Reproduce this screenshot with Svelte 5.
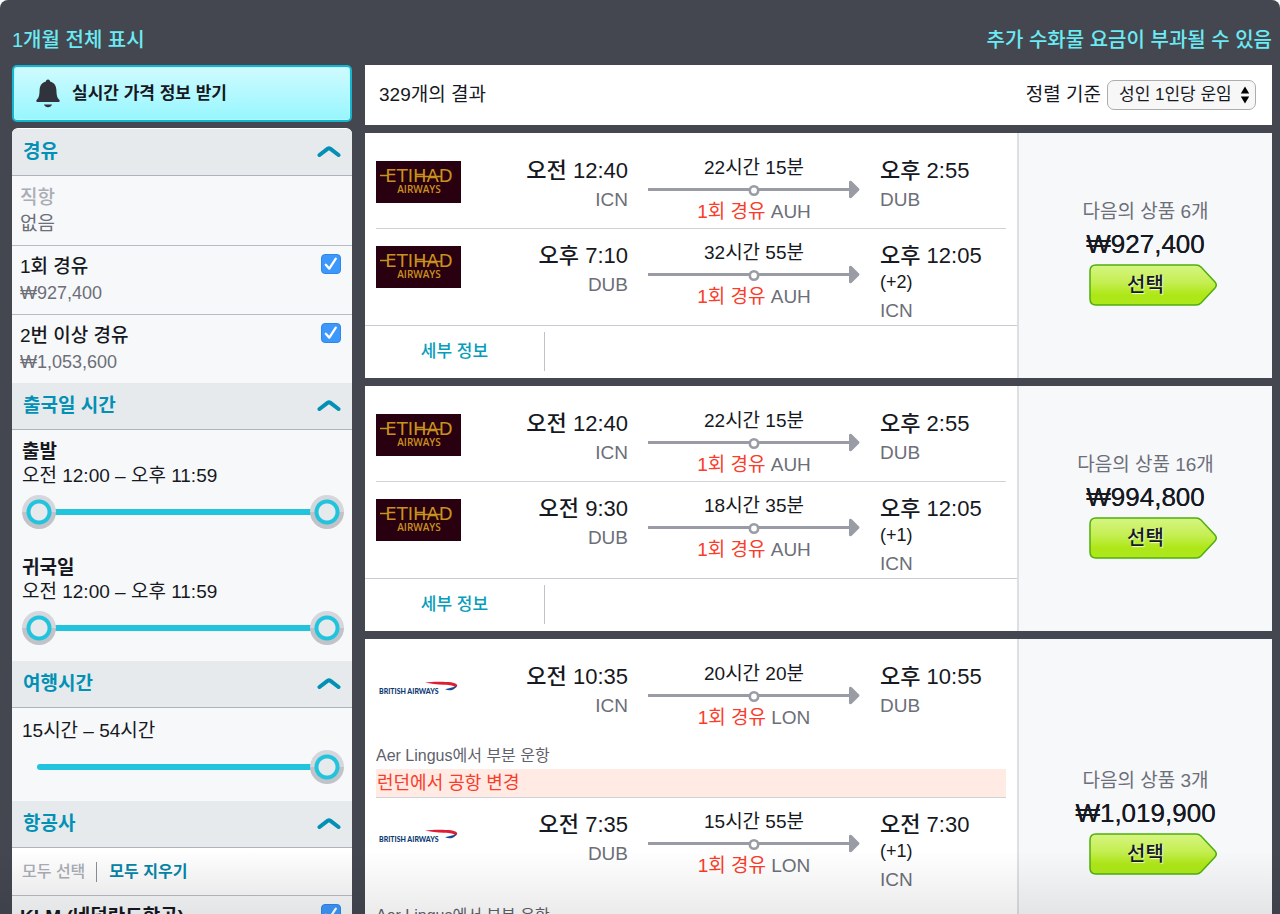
<script lang="ts">
	interface Leg {
		airline: 'etihad' | 'ba';
		depart: string;
		from: string;
		duration: string;
		via: string;
		arrive: string;
		days?: string;
		to: string;
		operator?: string;
		warning?: string;
	}

	interface Flight {
		deals: number;
		price: string;
		legs: Leg[];
	}

	const partly = 'Aer Lingus에서 부분 운항';
	const airportChange = '런던에서 공항 변경';

	const flights: Flight[] = [
		{
			deals: 6,
			price: '₩927,400',
			legs: [
				{ airline: 'etihad', depart: '오전 12:40', from: 'ICN', duration: '22시간 15분', via: 'AUH', arrive: '오후 2:55', to: 'DUB' },
				{ airline: 'etihad', depart: '오후 7:10', from: 'DUB', duration: '32시간 55분', via: 'AUH', arrive: '오후 12:05', days: '(+2)', to: 'ICN' }
			]
		},
		{
			deals: 16,
			price: '₩994,800',
			legs: [
				{ airline: 'etihad', depart: '오전 12:40', from: 'ICN', duration: '22시간 15분', via: 'AUH', arrive: '오후 2:55', to: 'DUB' },
				{ airline: 'etihad', depart: '오전 9:30', from: 'DUB', duration: '18시간 35분', via: 'AUH', arrive: '오후 12:05', days: '(+1)', to: 'ICN' }
			]
		},
		{
			deals: 3,
			price: '₩1,019,900',
			legs: [
				{ airline: 'ba', depart: '오전 10:35', from: 'ICN', duration: '20시간 20분', via: 'LON', arrive: '오후 10:55', to: 'DUB', operator: partly, warning: airportChange },
				{ airline: 'ba', depart: '오전 7:35', from: 'DUB', duration: '15시간 55분', via: 'LON', arrive: '오전 7:30', days: '(+1)', to: 'ICN', operator: partly, warning: airportChange }
			]
		}
	];

	const timeFilters = [
		{ id: 'out', title: '출발' },
		{ id: 'back', title: '귀국일' }
	];

	let open = $state({ stops: true, times: true, duration: true, airlines: true });
	let oneStop = $state(true);
	let twoStops = $state(true);
	let klm = $state(true);
</script>

{#snippet heading(title: string, key: keyof typeof open)}
	<h2 class="section-head">
		<button type="button" aria-expanded={open[key]} onclick={() => (open[key] = !open[key])}>
			{title}
			<svg class="chevron" class:closed={!open[key]} width="24" height="14" viewBox="0 0 24 14" aria-hidden="true">
				<path d="M2.500 10 10.800 3.600q1.200-.8 2.400 0L21.500 10" fill="none" stroke="#0291b5" stroke-width="4" stroke-linecap="round" stroke-linejoin="round" />
			</svg>
		</button>
	</h2>
{/snippet}

{#snippet tick()}
	<svg class="tick" width="20" height="20" viewBox="0 0 20 20" aria-hidden="true">
		<path d="M4.800 10.800 8.300 14.600 14.800 4.600" fill="none" stroke="#fff" stroke-width="2.300" stroke-linecap="round" stroke-linejoin="round" />
	</svg>
{/snippet}

{#snippet logo(airline: string)}
	{#if airline === 'etihad'}
		<svg class="logo" width="85" height="42" viewBox="0 0 85 42" role="img" aria-label="Etihad Airways">
			<rect width="85" height="42" fill="#28000f" />
			<g fill="#c8921e" text-anchor="middle">
				<text x="43" y="21" font-family="DejaVu Sans, sans-serif" font-size="18">ETIHAD</text>
				<text x="43" y="32" font-family="Open Sans, sans-serif" font-size="10" font-weight="600">AIRWAYS</text>
			</g>
			<path d="M4 14.500h8M40 15.500h26" stroke="#c8921e" stroke-width="1.500" />
		</svg>
	{:else}
		<svg class="logo" width="85" height="42" viewBox="0 0 85 42" role="img" aria-label="British Airways">
			<text x="3" y="27" font-family="Lato, sans-serif" font-size="7" font-weight="900" fill="#0d3a73">BRITISH AIRWAYS</text>
			<path d="M49 15.500C56 14.500 68 14.500 75 15.200 81 16 83 18.500 79.500 21 79 18.800 74 18 68 17.800 61 17.500 54 16.800 49 15.500Z" fill="#dc1f36" />
			<path d="M69 22.300C73 21.500 77 20.500 80.500 18.800 79.500 22 75 25 69 22.300Z" fill="#1c4a92" />
		</svg>
	{/if}
{/snippet}

<div class="page">
	<div class="top-links">
		<a href="#month">1개월 전체 표시</a>
		<a href="#baggage">추가 수화물 요금이 부과될 수 있음</a>
	</div>

	<div class="columns">
		<aside>
			<button type="button" class="alert-btn">
				<svg width="24" height="29" viewBox="0 0 24 29" aria-hidden="true">
					<path d="M12 .5c1.300 0 2 .8 2 2 4.300 1 6.200 4.300 6.400 8.500.2 5.500.6 7.500 3 10 .5.600.4 2-.7 2H1.300c-1.100 0-1.200-1.400-.7-2 2.400-2.500 2.800-4.500 3-10C3.800 6.800 5.700 3.500 10 2.500c0-1.200.7-2 2-2Z" fill="#30323c" />
					<path d="M8 25.500h8c-.8 1.800-2 2.800-4 2.800s-3.200-1-4-2.800Z" fill="#30323c" />
				</svg>
				실시간 가격 정보 받기
			</button>

			<div class="filters">
				{@render heading('경유', 'stops')}
				{#if open.stops}
					<div class="stop-row none">
						<div>직항</div>
						<div class="sub">없음</div>
					</div>
					<label class="stop-row">
						<span>1회 경유<span class="sub">₩927,400</span></span>
						<span class="check"><input type="checkbox" bind:checked={oneStop} />{@render tick()}</span>
					</label>
					<label class="stop-row last">
						<span>2번 이상 경유<span class="sub">₩1,053,600</span></span>
						<span class="check"><input type="checkbox" bind:checked={twoStops} />{@render tick()}</span>
					</label>
				{/if}

				{@render heading('출국일 시간', 'times')}
				{#if open.times}
					<div class="times">
						{#each timeFilters as filter (filter.id)}
							<div class="time-filter">
								<h3>{filter.title}</h3>
								<p>오전 12:00 – 오후 11:59</p>
								<div class="slider">
									<input type="range" min="0" max="1439" value="0" aria-label="{filter.title} 최소" />
									<input type="range" min="0" max="1439" value="1439" aria-label="{filter.title} 최대" />
								</div>
							</div>
						{/each}
					</div>
				{/if}

				{@render heading('여행시간', 'duration')}
				{#if open.duration}
					<div class="duration">
						<p>15시간 – 54시간</p>
						<div class="slider">
							<input type="range" min="15" max="54" value="54" aria-label="여행시간" />
						</div>
					</div>
				{/if}

				{@render heading('항공사', 'airlines')}
				{#if open.airlines}
					<div class="pick-all">
						<button type="button" disabled>모두 선택</button>
						<button type="button" onclick={() => (klm = false)}>모두 지우기</button>
					</div>
					<label class="stop-row airline">
						<span>KLM (네덜란드항공)</span>
						<span class="check"><input type="checkbox" bind:checked={klm} />{@render tick()}</span>
					</label>
				{/if}
			</div>
		</aside>

		<main>
			<div class="result-bar">
				<span>329개의 결과</span>
				<div class="sort">
					<label for="sort">정렬 기준</label>
					<div class="select">
						<select id="sort">
							<option>성인 1인당 운임</option>
						</select>
						<svg width="10" height="18" viewBox="0 0 10 18" aria-hidden="true">
							<path d="M5 .5 9.200 7.500H.8ZM5 17.500 9.200 10.500H.8Z" fill="#000" />
						</svg>
					</div>
				</div>
			</div>

			{#each flights as flight}
				<article class="card">
					<div class="trip">
						<div class="legs">
							{#each flight.legs as leg}
								<section class="leg-wrap">
									<div class="leg">
										{@render logo(leg.airline)}
										<div class="depart">
											<div class="time">{leg.depart}</div>
											<div class="code">{leg.from}</div>
										</div>
										<div class="path">
											<div>{leg.duration}</div>
											<svg width="212" height="20" viewBox="0 0 212 20" aria-hidden="true">
												<path d="M0 9.500h202" stroke="#9a9ca5" stroke-width="3" />
												<path d="M201 1.500q1.500-1.500 3 0l7 7q1 1 0 2l-7 7q-1.500 1.500-3 0Z" fill="#9a9ca5" />
												<circle cx="106" cy="10.500" r="4.200" fill="#fff" stroke="#9a9ca5" stroke-width="2.600" />
											</svg>
											<div><span class="stops">1회 경유</span> <span class="via">{leg.via}</span></div>
										</div>
										<div class="arrive">
											<div class="time">{leg.arrive}</div>
											{#if leg.days}
												<div class="days">{leg.days}</div>
											{/if}
											<div class="code">{leg.to}</div>
										</div>
									</div>
									{#if leg.operator}
										<div class="operator">{leg.operator}</div>
									{/if}
									{#if leg.warning}
										<div class="warning">{leg.warning}</div>
									{/if}
								</section>
							{/each}
						</div>
						<div class="card-foot">
							<a href="#details">세부 정보</a>
						</div>
					</div>
					<div class="offer">
						<div class="deals">다음의 상품 {flight.deals}개</div>
						<div class="price">{flight.price}</div>
						<button type="button" class="choose">
							<svg width="128" height="42" viewBox="0 0 128 42" aria-hidden="true">
								<defs>
									<linearGradient id="lime" x1="0" y1="0" x2="0" y2="1">
										<stop offset="0" stop-color="#d6f583" />
										<stop offset=".45" stop-color="#c4ee50" />
										<stop offset=".75" stop-color="#aee717" />
										<stop offset="1" stop-color="#aee81c" />
									</linearGradient>
								</defs>
								<path d="M7 1h100q3 0 5 2l14 15q2.500 3 0 6l-14 15q-2 2-5 2H7q-6 0-6-6V7q0-6 6-6Z" fill="url(#lime)" stroke="#4fae0c" stroke-width="1.500" />
							</svg>
							<span>선택</span>
						</button>
					</div>
				</article>
			{/each}
		</main>
	</div>
	<div class="fade"></div>
</div>

<style>
	:global(body) {
		margin: 0;
		background: #fff;
	}

	.page {
		position: relative;
		box-sizing: border-box;
		height: 100vh;
		overflow: hidden;
		padding: 0 8px 0 12px;
		border-radius: 8px 8px 0 0;
		background: #444750;
		color: #161822;
		font-family: 'Liberation Sans', 'Noto Sans CJK KR', sans-serif;
		font-size: 19px;
		line-height: 24px;
	}

	h2,
	h3,
	p {
		margin: 0;
		font-size: inherit;
		font-weight: 400;
	}

	button,
	select {
		font: inherit;
		color: inherit;
		cursor: pointer;
	}

	a {
		text-decoration: none;
	}

	.top-links {
		display: flex;
		justify-content: space-between;
		padding: 28px 0 13px;
		font-size: 20px;
	}

	.top-links a {
		color: #6bebf3;
		font-weight: 500;
	}

	.columns {
		display: grid;
		grid-template-columns: 340px 1fr;
		gap: 13px;
		align-items: start;
	}

	/* sidebar */
	.alert-btn {
		display: flex;
		align-items: center;
		gap: 12px;
		width: 100%;
		height: 57px;
		margin-bottom: 6px;
		padding: 0 22px;
		border: 2px solid #17b5cd;
		border-radius: 5px;
		background: linear-gradient(#cffbff, #97f6fe);
		box-shadow: inset 0 0 0 1px #b4f8ff;
		font-size: 17px;
		font-weight: 600;
	}

	.filters {
		border-top: 1px solid #fff;
		border-radius: 6px 6px 0 0;
		overflow: hidden;
		background: #f7f8fa;
	}

	.section-head button {
		display: flex;
		align-items: center;
		justify-content: space-between;
		width: 100%;
		height: 47px;
		padding: 0 11px;
		border: 0;
		border-bottom: 1px solid #b0b3bb;
		background: #e6eaed;
		color: #0291b5;
		font-weight: 600;
	}

	.chevron.closed {
		transform: rotate(180deg);
	}

	.stop-row {
		display: flex;
		justify-content: space-between;
		padding: 8px 11px 8px 8px;
		border-bottom: 1px solid #b8bbc3;
		font-weight: 500;
		line-height: 26px;
	}

	.stop-row.none {
		display: block;
		padding-top: 9px;
		color: #aaadb5;
	}

	.stop-row.last {
		border-bottom: 0;
	}

	.sub {
		display: block;
		color: #6c6e78;
		font-weight: 400;
	}

	span.sub {
		font-size: 18px;
	}

	.check {
		position: relative;
		width: 20px;
		height: 20px;
	}

	.check input {
		display: block;
		width: 20px;
		height: 20px;
		margin: 0;
		appearance: none;
		border: 1px solid #2f86ea;
		border-radius: 4px;
		background: #fff;
	}

	.check input:checked {
		background: #3c98fb;
	}

	.tick {
		position: absolute;
		inset: 0;
		pointer-events: none;
	}

	.times {
		display: flex;
		flex-direction: column;
		gap: 27px;
		padding: 10px 8px 16px 10px;
	}

	.time-filter h3 {
		font-weight: 600;
	}

	.duration {
		padding: 11px 8px 17px 10px;
	}

	.slider {
		position: relative;
		height: 34px;
		margin-top: 7px;
	}

	.slider::before {
		content: '';
		position: absolute;
		inset: 14px 15px;
		border-radius: 3px;
		background: #22c3dc;
	}

	.slider input {
		position: absolute;
		inset: 0;
		width: 100%;
		height: 34px;
		margin: 0;
		appearance: none;
		background: none;
		pointer-events: none;
	}

	.slider input::-webkit-slider-thumb {
		appearance: none;
		width: 34px;
		height: 34px;
		border-radius: 50%;
		background:
			radial-gradient(circle, #e6eaed 8px, #22c3dc 9px, #22c3dc 12px, transparent 13px),
			linear-gradient(#d5d7dc 50%, #c1c3c9 50%);
		pointer-events: auto;
	}

	.pick-all {
		display: flex;
		align-items: center;
		height: 47px;
		padding: 0 10px;
		border-bottom: 1px solid #b8bbc3;
		background: linear-gradient(#fff, #f9f9fa);
		font-size: 16px;
	}

	.pick-all button {
		padding: 0;
		border: 0;
		background: none;
		color: #0285a8;
		font-weight: 600;
		line-height: 20px;
	}

	.pick-all button:disabled {
		margin-right: 12px;
		padding-right: 11px;
		border-right: 1px solid #8c8e96;
		color: #aaadb5;
		font-weight: 500;
	}

	.airline {
		font-weight: 600;
	}

	/* results */
	main {
		display: flex;
		flex-direction: column;
		gap: 8px;
		min-width: 0;
	}

	.result-bar {
		display: flex;
		align-items: center;
		justify-content: space-between;
		height: 60px;
		padding: 0 16px 0 14px;
		background: #fff;
	}

	.sort {
		display: flex;
		align-items: center;
		gap: 6px;
	}

	.select {
		position: relative;
	}

	.select select {
		display: block;
		width: 149px;
		height: 30px;
		padding: 0 0 0 11px;
		appearance: none;
		border: 1px solid #adadad;
		border-radius: 7px;
		background: #f7f7f7;
		font-size: 17px;
	}

	.select svg {
		position: absolute;
		top: 6px;
		right: 6px;
		pointer-events: none;
	}

	.card {
		display: grid;
		grid-template-columns: 1fr 255px;
		background: #fff;
	}

	.legs {
		padding: 11px 11px 0;
		border-bottom: 1px solid #c9ccd2;
	}

	.leg-wrap:first-child {
		border-bottom: 1px solid #cfd2d6;
	}

	.leg {
		display: grid;
		grid-template-columns: 85px 1fr 212px 126px;
		gap: 20px;
		min-height: 84px;
	}

	.logo {
		margin-top: 17px;
	}

	.depart,
	.path,
	.arrive {
		padding-top: 12px;
	}

	.depart {
		text-align: right;
	}

	.time {
		font-size: 22px;
		font-weight: 500;
		line-height: 30px;
	}

	.code {
		color: #6c6e78;
		line-height: 28px;
	}

	.days {
		padding-bottom: 4px;
		font-size: 18px;
		line-height: 22px;
	}

	.path {
		text-align: center;
	}

	.path svg {
		display: block;
	}

	.stops {
		color: #fa3c2b;
	}

	.via {
		color: #6c6e78;
	}

	.operator {
		padding: 10px 0 1px;
		color: #5f616b;
		font-size: 16px;
	}

	.warning {
		padding-left: 1px;
		background: #ffeae4;
		color: #fa3c2b;
		font-size: 18px;
		line-height: 28px;
	}

	.card-foot {
		display: flex;
		padding: 6px 0 7px;
	}

	.card-foot a {
		width: 179px;
		border-right: 1px solid #bfc2c8;
		color: #069dbb;
		font-size: 17px;
		font-weight: 500;
		line-height: 39px;
		text-align: center;
	}

	.offer {
		display: flex;
		flex-direction: column;
		align-items: center;
		justify-content: center;
		padding-bottom: 7px;
		border-left: 2px solid #dcdfe4;
		background: #f7f8fa;
	}

	.deals {
		color: #6c6e78;
		line-height: 28px;
	}

	.price {
		font-size: 26px;
		font-weight: 500;
		line-height: 36px;
		text-shadow: 0 0 currentColor;
	}

	.choose {
		position: relative;
		width: 128px;
		height: 42px;
		margin: 2px 0 0 14px;
		padding: 0 14px 0 0;
		border: 0;
		background: none;
		font-size: 20px;
		font-weight: 500;
		text-shadow: 1px 1px 1px #f4ffd8;
	}

	.choose svg {
		position: absolute;
		inset: 0;
	}

	.choose span {
		position: relative;
	}

	.fade {
		position: absolute;
		right: 0;
		bottom: 0;
		left: 0;
		height: 64px;
		background: linear-gradient(transparent, rgba(0, 0, 0, 0.08));
		pointer-events: none;
	}
</style>
